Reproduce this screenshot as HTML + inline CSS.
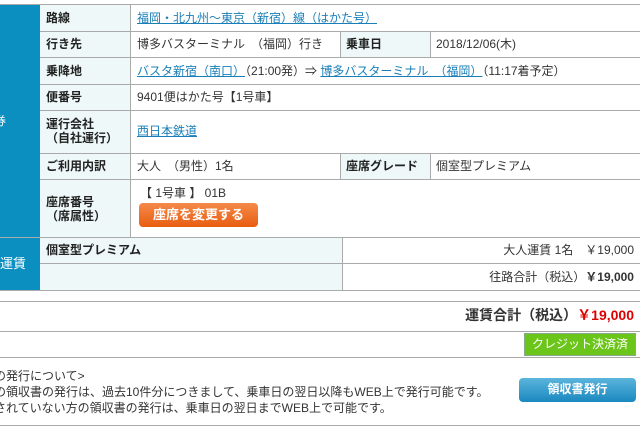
<!DOCTYPE html>
<html><head><meta charset="utf-8"><style>
body{margin:0;width:640px;height:427px;overflow:hidden;background:#fff;font-family:"Liberation Sans","Noto Sans CJK JP",sans-serif;font-size:12px;color:#333;position:relative}
.a{position:absolute}
.blue{background:#0a8fc0;color:#fff}
.lab{background:#eef8f8;font-weight:bold;color:#222}
.h{position:absolute;height:1px;background:#aaa}
.v{position:absolute;width:1px;background:#aaa}
a{color:#1a7fb8;text-decoration:underline}
.t{position:absolute;line-height:14px;white-space:nowrap}
</style></head><body>
<div class="a blue" style="left:0;top:4px;width:40px;height:286px"></div>
<div class="t" style="left:-6px;top:114px;color:#fff">券</div>
<div class="t" style="left:0;top:257px;color:#fff;font-size:13px">運賃</div>
<div class="a lab" style="left:40px;top:4px;width:90px;height:233px"></div>
<div class="a lab" style="left:340px;top:31px;width:90px;height:26px"></div>
<div class="a lab" style="left:340px;top:153px;width:90px;height:26px"></div>
<div class="a lab" style="left:40px;top:237px;width:302px;height:53px"></div>
<div class="h" style="left:0;top:4px;width:640px"></div>
<div class="h" style="left:40px;top:31px;width:600px"></div>
<div class="h" style="left:40px;top:57px;width:600px"></div>
<div class="h" style="left:40px;top:84px;width:600px"></div>
<div class="h" style="left:40px;top:110px;width:600px"></div>
<div class="h" style="left:40px;top:153px;width:600px"></div>
<div class="h" style="left:40px;top:179px;width:600px"></div>
<div class="h" style="left:0;top:237px;width:640px"></div>
<div class="h" style="left:40px;top:263px;width:600px"></div>
<div class="h" style="left:0;top:290px;width:640px"></div>
<div class="v" style="left:130px;top:4px;height:233px"></div>
<div class="v" style="left:340px;top:31px;height:26px"></div>
<div class="v" style="left:430px;top:31px;height:26px"></div>
<div class="v" style="left:340px;top:153px;height:26px"></div>
<div class="v" style="left:430px;top:153px;height:26px"></div>
<div class="v" style="left:342px;top:237px;height:53px"></div>
<div class="t lab" style="left:46px;top:11px;background:none">路線</div>
<div class="t" style="left:137px;top:11px"><a>福岡・北九州～東京（新宿）線（はかた号）</a></div>
<div class="t lab" style="left:46px;top:37px;background:none">行き先</div>
<div class="t" style="left:137px;top:37px">博多バスターミナル　（福岡）行き</div>
<div class="t lab" style="left:346px;top:37px;background:none">乗車日</div>
<div class="t" style="left:436px;top:37px">2018/12/06(木)</div>
<div class="t lab" style="left:46px;top:64px;background:none">乗降地</div>
<div class="t" style="left:137px;top:64px"><a>バスタ新宿（南口）</a>（21:00発）⇒ <a>博多バスターミナル　（福岡）</a>（11:17着予定）</div>
<div class="t lab" style="left:46px;top:90px;background:none">便番号</div>
<div class="t" style="left:137px;top:90px">9401便はかた号【1号車】</div>
<div class="t lab" style="left:46px;top:117px;background:none">運行会社<br>（自社運行）</div>
<div class="t" style="left:137px;top:124px"><a>西日本鉄道</a></div>
<div class="t lab" style="left:46px;top:159px;background:none">ご利用内訳</div>
<div class="t" style="left:137px;top:159px">大人　（男性）1名</div>
<div class="t lab" style="left:346px;top:159px;background:none">座席グレード</div>
<div class="t" style="left:436px;top:159px">個室型プレミアム</div>
<div class="t lab" style="left:46px;top:195px;background:none">座席番号<br>（席属性）</div>
<div class="t" style="left:140px;top:186px">【 1号車 】 01B</div>
<div class="a" style="left:139px;top:203px;width:119px;height:24px;border-radius:4px;background:linear-gradient(#f58a4a,#e85d10);color:#fff;font-weight:bold;font-size:13px;text-align:center;line-height:24px">座席を変更する</div>
<div class="t lab" style="left:46px;top:243px;background:none">個室型プレミアム</div>
<div class="t" style="right:6px;top:243px">大人運賃 1名　￥19,000</div>
<div class="t" style="right:6px;top:270px">往路合計（税込）<b>￥19,000</b></div>
<div class="h" style="left:0;top:301px;width:640px"></div>
<div class="t" style="right:6px;top:308px;font-size:14px;font-weight:bold">運賃合計（税込）<span style="color:#d00">￥19,000</span></div>
<div class="h" style="left:0;top:331px;width:640px"></div>
<div class="a" style="left:524px;top:333px;width:112px;height:23px;background:#6cc51a;border:1px solid #8a8;box-sizing:border-box;color:#fff;text-align:center;line-height:21px">クレジット決済済</div>
<div class="h" style="left:0;top:357px;width:640px"></div>
<div class="t" style="left:-6px;top:368px;line-height:16px">の発行について&gt;<br>の領収書の発行は、過去10件分につきまして、乗車日の翌日以降もWEB上で発行可能です。<br>されていない方の領収書の発行は、乗車日の翌日までWEB上で可能です。</div>
<div class="a" style="left:519px;top:378px;width:117px;height:24px;border-radius:4px;background:linear-gradient(#5bb5dc,#1a88bf);color:#fff;font-weight:bold;text-align:center;line-height:22px">領収書発行</div>
<div class="h" style="left:0;top:425px;width:640px"></div>
</body></html>
